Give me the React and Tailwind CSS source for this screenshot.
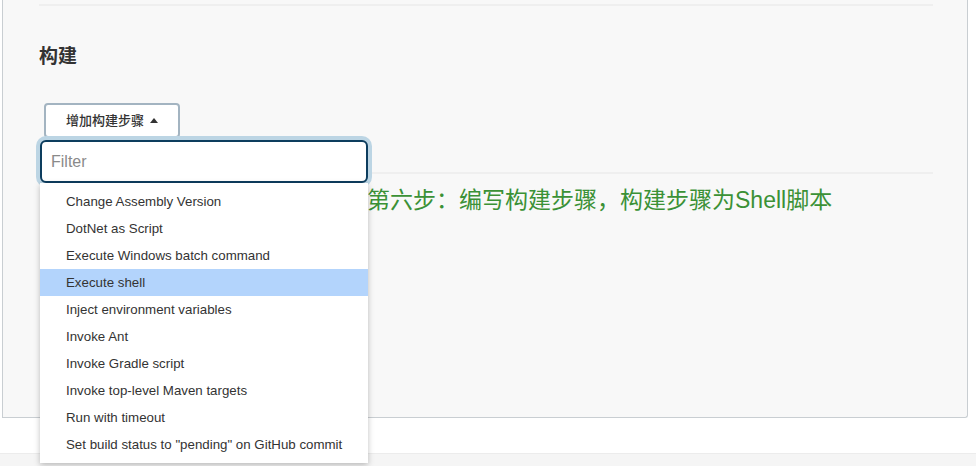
import React from "react";

const steps = [
  "Change Assembly Version",
  "DotNet as Script",
  "Execute Windows batch command",
  "Execute shell",
  "Inject environment variables",
  "Invoke Ant",
  "Invoke Gradle script",
  "Invoke top-level Maven targets",
  "Run with timeout",
  'Set build status to "pending" on GitHub commit',
];

const font = { fontFamily: '"Liberation Sans", "Noto Sans CJK SC", sans-serif' };

export default function App() {
  return (
    <div
      className="relative w-[976px] h-[466px] overflow-hidden bg-white"
      style={font}
    >
      {/* build section panel */}
      <div className="ml-[2px] w-[966px] h-[418px] bg-[#f8f8f8] border-x border-b border-[#c9ced2] rounded-br-[3px] pt-[4px]">
        <div className="ml-[36px] w-[894px] h-[2px] bg-[#efefef]" />
        <h2 className="ml-[36px] mt-[39px] text-[19px] font-bold text-[#333] leading-[24px]">
          构建
        </h2>
        <div className="ml-[41px] mt-[34px]">
          <button className="h-[35px] w-[136px] flex items-center justify-center gap-[6px] bg-white border-2 border-[#a3b4c1] rounded-[4px] text-[13px] font-medium text-[#333]">
            增加构建步骤
            <span className="w-0 h-0 border-x-[4px] border-x-transparent border-b-[5px] border-b-[#333]" />
          </button>
        </div>
        <div className="ml-[36px] mt-[34px] w-[894px] h-[2px] bg-[#efefef]" />
        <p className="ml-[364px] mt-[11px] text-[23px] leading-[30px] text-[#3b9136]">
          第六步：编写构建步骤，构建步骤为Shell脚本
        </p>
      </div>

      {/* bottom bar */}
      <div className="mt-[35px] h-[20px] bg-[#f5f5f5] border-t border-[#ececec]" />

      {/* step dropdown */}
      <div className="absolute left-[40px] top-[140px] w-[328px]">
        <div className="h-[43px] rounded-[6px] border-2 border-[#0d3d5e] bg-white ring-4 ring-[#bcd5e4] flex items-center px-[9px]">
          <span className="text-[16px] text-[#8a8a8a]">Filter</span>
        </div>
        <ul className="bg-white py-[5px] shadow-[0_2px_6px_rgba(0,0,0,0.25)]">
          {steps.map((s) => (
            <li
              key={s}
              className={`h-[27px] flex items-center pl-[26px] text-[13.3px] text-[#333] ${
                s === "Execute shell" ? "bg-[#b3d4fc]" : ""
              }`}
            >
              {s}
            </li>
          ))}
        </ul>
      </div>
    </div>
  );
}
